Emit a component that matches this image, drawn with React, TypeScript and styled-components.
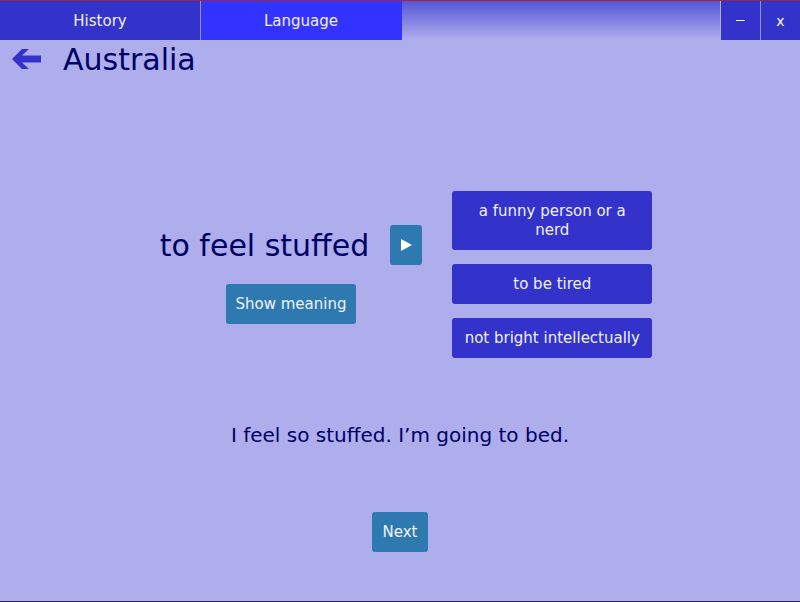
import React from "react";
import styled, { createGlobalStyle } from "styled-components";

const Global = createGlobalStyle`
  html, body { margin: 0; padding: 0; }
  body { background: #aeaeec; font-family: "DejaVu Sans", "Liberation Sans", sans-serif; }
`;

const Window = styled.div`
  width: 800px;
  height: 602px;
  display: flex;
  flex-direction: column;
  background: #aeaeec;
  border-top: 1px solid #962a3c;
  border-bottom: 1px solid #2b1b4d;
  box-sizing: border-box;
  overflow: hidden;
`;

const TopBar = styled.div`
  display: flex;
  height: 39px;
  flex-shrink: 0;
`;

const Tab = styled.div<{ $active?: boolean }>`
  width: 200px;
  display: flex;
  align-items: center;
  justify-content: center;
  color: #f0f0ff;
  font-size: 15px;
  background: ${(p) => (p.$active ? "#3333ff" : "#3333cc")};
  border-right: 1px solid ${(p) => (p.$active ? "#3333ff" : "#8f8fe6")};
`;

const Filler = styled.div`
  flex: 1;
  background: linear-gradient(#5555d8, #aeaeec);
`;

const WinButton = styled.div<{ $sep?: boolean }>`
  width: 39px;
  display: flex;
  align-items: center;
  justify-content: center;
  color: #ffffff;
  font-size: 14px;
  background: #3333cc;
  border-left: 1px solid ${(p) => (p.$sep ? "#8f8fe6" : "#aeaeec")};
`;

const Dash = styled.span`
  display: block;
  width: 9px;
  height: 1px;
  background: #ffffff;
`;

const TitleRow = styled.div`
  display: flex;
  align-items: center;
  gap: 21px;
  padding: 1px 0 0 12px;
  height: 36px;
`;

const Title = styled.h1`
  margin: 0;
  font-weight: normal;
  font-size: 30px;
  color: #000066;
`;

const Card = styled.div`
  display: flex;
  align-items: center;
  justify-content: center;
  gap: 30px;
  padding-left: 12px;
  margin-top: 114px;
`;

const LeftCol = styled.div`
  display: flex;
  flex-direction: column;
  align-items: center;
  gap: 19px;
`;

const WordRow = styled.div`
  display: flex;
  align-items: center;
  gap: 21px;
`;

const Word = styled.div`
  font-size: 30px;
  color: #000066;
`;

const BlueButton = styled.button`
  border: none;
  border-radius: 3px;
  background: #2e7ab0;
  color: #f2f2ff;
  font-family: inherit;
  font-size: 15px;
  height: 40px;
  padding: 0 10px;
  display: flex;
  align-items: center;
  justify-content: center;
`;

const PlayButton = styled(BlueButton)`
  width: 32px;
  padding: 0;
`;

const NextButton = styled(BlueButton)`
  padding: 0 11px;
`;

const Options = styled.div`
  display: flex;
  flex-direction: column;
  gap: 14px;
`;

const Option = styled.button<{ $tall?: boolean }>`
  width: 200px;
  min-height: ${(p) => (p.$tall ? "59px" : "40px")};
  border: none;
  border-radius: 3px;
  background: #3333cc;
  color: #f0f0ff;
  font-family: inherit;
  font-size: 15px;
  line-height: 19px;
  padding: 0 12px;
  text-align: center;
`;

const Sentence = styled.div`
  margin-top: 65px;
  text-align: center;
  font-size: 20px;
  color: #000066;
`;

const NextRow = styled.div`
  display: flex;
  justify-content: center;
  margin-top: 65px;
`;

export default function App() {
  return (
    <>
      <Global />
      <Window>
        <TopBar>
          <Tab>History</Tab>
          <Tab $active>Language</Tab>
          <Filler />
          <WinButton>
            <Dash />
          </WinButton>
          <WinButton $sep>x</WinButton>
        </TopBar>
        <TitleRow>
          <svg width="30" height="22" viewBox="0 0 30 22">
            <polygon points="0,11 10,1 17,1 10,7.5 29,7.5 29,14.5 10,14.5 17,21 10,21" fill="#3333cc" />
          </svg>
          <Title>Australia</Title>
        </TitleRow>
        <Card>
          <LeftCol>
            <WordRow>
              <Word>to feel stuffed</Word>
              <PlayButton>
                <svg width="12" height="12" viewBox="0 0 12 12">
                  <polygon points="1,0 12,6 1,12" fill="#ffffff" />
                </svg>
              </PlayButton>
            </WordRow>
            <BlueButton>Show meaning</BlueButton>
          </LeftCol>
          <Options>
            <Option $tall>a funny person or a nerd</Option>
            <Option>to be tired</Option>
            <Option>not bright intellectually</Option>
          </Options>
        </Card>
        <Sentence>I feel so stuffed. I’m going to bed.</Sentence>
        <NextRow>
          <NextButton>Next</NextButton>
        </NextRow>
      </Window>
    </>
  );
}
